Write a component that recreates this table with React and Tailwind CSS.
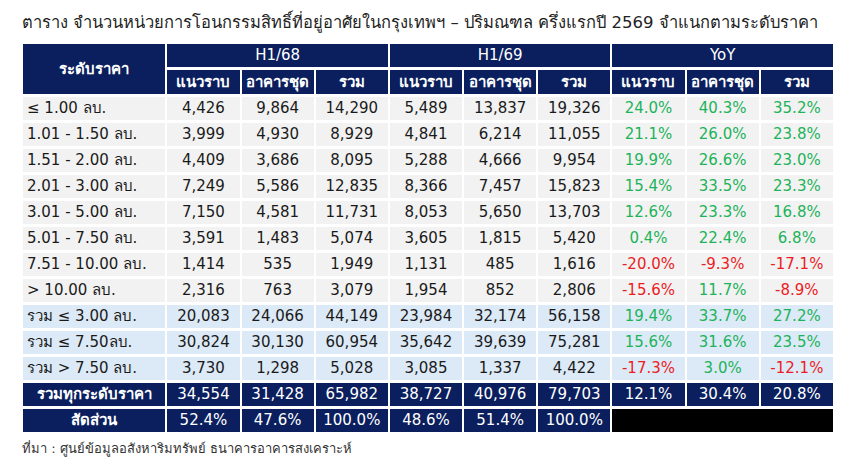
import React from "react";

const rows = [
  { label: "≤ 1.00 ลบ.", a: ["4,426", "9,864", "14,290"], b: ["5,489", "13,837", "19,326"], y: ["24.0%", "40.3%", "35.2%"] },
  { label: "1.01 - 1.50 ลบ.", a: ["3,999", "4,930", "8,929"], b: ["4,841", "6,214", "11,055"], y: ["21.1%", "26.0%", "23.8%"] },
  { label: "1.51 - 2.00 ลบ.", a: ["4,409", "3,686", "8,095"], b: ["5,288", "4,666", "9,954"], y: ["19.9%", "26.6%", "23.0%"] },
  { label: "2.01 - 3.00 ลบ.", a: ["7,249", "5,586", "12,835"], b: ["8,366", "7,457", "15,823"], y: ["15.4%", "33.5%", "23.3%"] },
  { label: "3.01 - 5.00 ลบ.", a: ["7,150", "4,581", "11,731"], b: ["8,053", "5,650", "13,703"], y: ["12.6%", "23.3%", "16.8%"] },
  { label: "5.01 - 7.50 ลบ.", a: ["3,591", "1,483", "5,074"], b: ["3,605", "1,815", "5,420"], y: ["0.4%", "22.4%", "6.8%"] },
  { label: "7.51 - 10.00 ลบ.", a: ["1,414", "535", "1,949"], b: ["1,131", "485", "1,616"], y: ["-20.0%", "-9.3%", "-17.1%"] },
  { label: "> 10.00 ลบ.", a: ["2,316", "763", "3,079"], b: ["1,954", "852", "2,806"], y: ["-15.6%", "11.7%", "-8.9%"] },
];

const subtotals = [
  { label: "รวม ≤ 3.00 ลบ.", a: ["20,083", "24,066", "44,149"], b: ["23,984", "32,174", "56,158"], y: ["19.4%", "33.7%", "27.2%"] },
  { label: "รวม ≤ 7.50ลบ.", a: ["30,824", "30,130", "60,954"], b: ["35,642", "39,639", "75,281"], y: ["15.6%", "31.6%", "23.5%"] },
  { label: "รวม > 7.50 ลบ.", a: ["3,730", "1,298", "5,028"], b: ["3,085", "1,337", "4,422"], y: ["-17.3%", "3.0%", "-12.1%"] },
];

const pctColor = (v) => (v.startsWith("-") ? "text-[#ec1c24]" : "text-[#1db35a]");

const DataRow = ({ r, bg }) => (
  <tr className="h-[23px]">
    <td className={`${bg} pl-[4px] text-left`}>{r.label}</td>
    {[...r.a, ...r.b].map((v, i) => (
      <td key={i} className={`${bg} text-center`}>{v}</td>
    ))}
    {r.y.map((v, i) => (
      <td key={"y" + i} className={`${bg} text-center ${pctColor(v)}`}>{v}</td>
    ))}
  </tr>
);

export default function App() {
  const head = "bg-[#0b1f5e] text-white";
  return (
    <div className="w-[850px] h-[468px] bg-white text-[#1a1a1a] font-['DejaVu_Sans',sans-serif] overflow-hidden">
      <h1 className="pl-[22px] pt-[9px] text-[16.5px] leading-[28px] text-[#222] font-normal whitespace-nowrap">
        ตาราง จำนวนหน่วยการโอนกรรมสิทธิ์ที่อยู่อาศัยในกรุงเทพฯ – ปริมณฑล ครึ่งแรกปี 2569 จำแนกตามระดับราคา
      </h1>
      <table className="ml-[21px] mt-[4px] border-separate border-spacing-x-[2px] border-spacing-y-[3px] text-[15px] leading-none table-fixed w-[814px]">
        <colgroup>
          <col className="w-[142px]" />
          {Array.from({ length: 9 }).map((_, i) => (
            <col key={i} className="w-[72px]" />
          ))}
        </colgroup>
        <thead>
          <tr className="h-[23px]">
            <th rowSpan={2} className={`${head} font-bold text-center`}>ระดับราคา</th>
            <th colSpan={3} className={`${head} font-normal`}>H1/68</th>
            <th colSpan={3} className={`${head} font-normal`}>H1/69</th>
            <th colSpan={3} className={`${head} font-normal`}>YoY</th>
          </tr>
          <tr className="h-[24px]">
            {["แนวราบ", "อาคารชุด", "รวม", "แนวราบ", "อาคารชุด", "รวม", "แนวราบ", "อาคารชุด", "รวม"].map((t, i) => (
              <th key={i} className={`${head} font-bold text-center`}>{t}</th>
            ))}
          </tr>
        </thead>
        <tbody>
          {rows.map((r, i) => (
            <DataRow key={i} r={r} bg="bg-[#f2f2f2]" />
          ))}
          {subtotals.map((r, i) => (
            <DataRow key={"s" + i} r={r} bg="bg-[#dce9f6]" />
          ))}
          <tr className="h-[23px]">
            <td className={`${head} font-bold text-center`}>รวมทุกระดับราคา</td>
            {["34,554", "31,428", "65,982", "38,727", "40,976", "79,703", "12.1%", "30.4%", "20.8%"].map((v, i) => (
              <td key={i} className={`${head} text-center`}>{v}</td>
            ))}
          </tr>
          <tr className="h-[23px]">
            <td className={`${head} font-bold text-center`}>สัดส่วน</td>
            {["52.4%", "47.6%", "100.0%", "48.6%", "51.4%", "100.0%"].map((v, i) => (
              <td key={i} className={`${head} text-center`}>{v}</td>
            ))}
            <td colSpan={3} className="bg-black"></td>
          </tr>
        </tbody>
      </table>
      <p className="pl-[22px] mt-[4px] text-[13px] text-[#333]">
        ที่มา : ศูนย์ข้อมูลอสังหาริมทรัพย์ ธนาคารอาคารสงเคราะห์
      </p>
    </div>
  );
}
